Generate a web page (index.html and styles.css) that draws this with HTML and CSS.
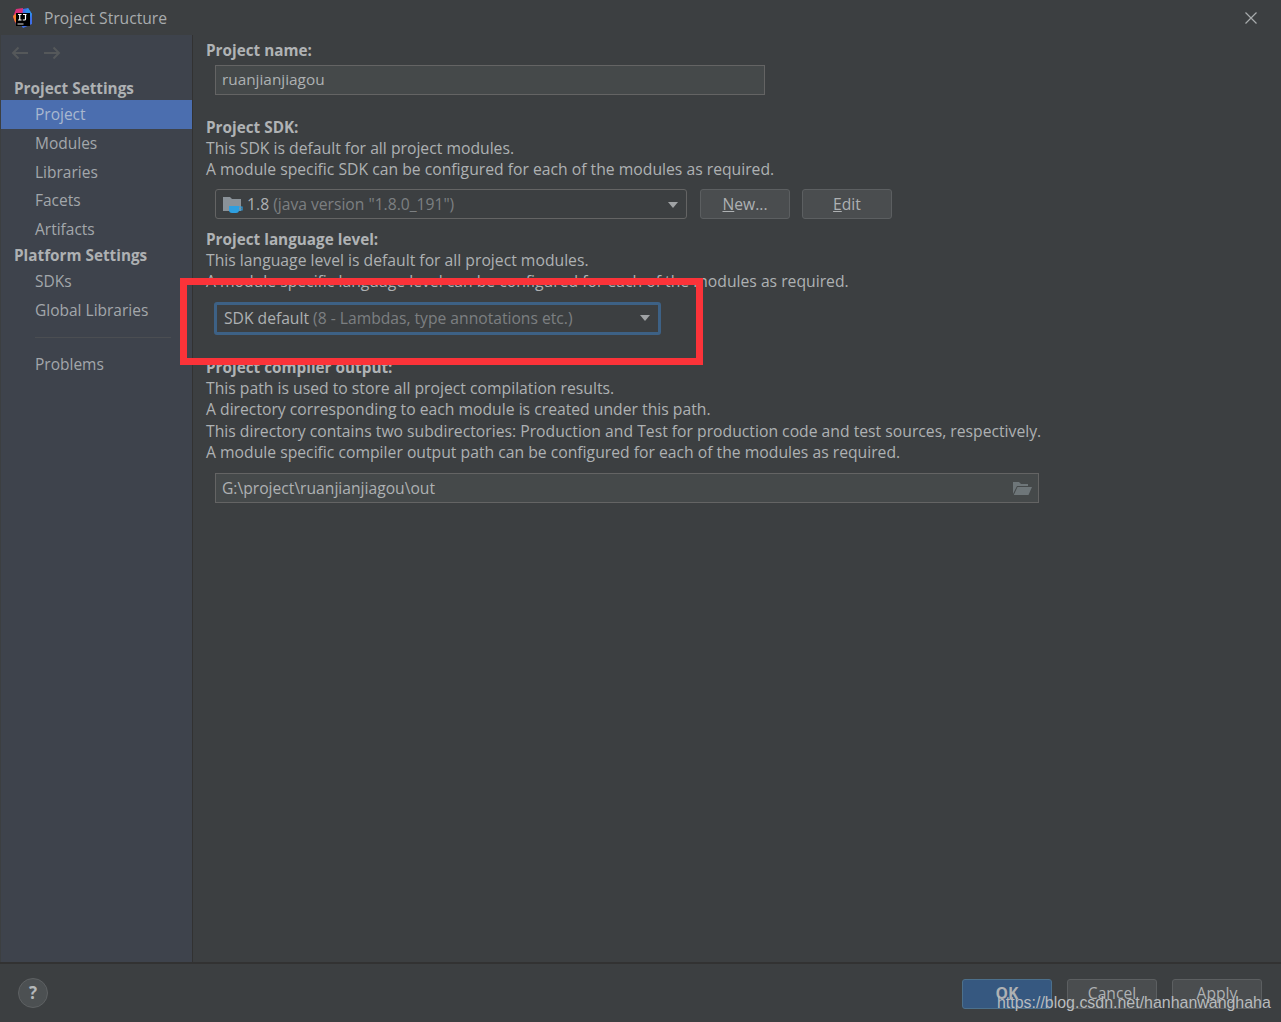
FILE: index.html
```html
<!DOCTYPE html>
<html lang="en">
<head>
    <meta charset="UTF-8">
    <title>Project Structure</title>
    <link rel="stylesheet" href="styles.css">
</head>
<body>
    <div class="dialog">
        <div class="titlebar">
            <svg class="app-logo" width="20" height="20" viewBox="0 0 20 20">
                <path d="M3 1 L10 0 L10 18 L3 16 L0 9 Z" fill="#d9307a"/>
                <path d="M0 8 L4 5 L5 15 L2 14 Z" fill="#f5822a"/>
                <path d="M10 1 L15 0 L19 6 L19 16 L10 20 L8 17 Z" fill="#3f6ee8"/>
                <path d="M12 3 L15 0 L19 6 L17 10 Z" fill="#2f8fe8"/>
                <rect x="3" y="5" width="14" height="13" fill="#000"/>
                <rect x="4.500" y="15.500" width="6" height="1" fill="#ddd"/>
                <path d="M5 6.500 H8.500 M6.750 6.500 V12 M5 12 H8.500 M10 6.500 H13.500 M12.500 6.500 V11 Q12.500 12 11.500 12 H9.800" stroke="#fff" stroke-width="1.200" fill="none"/>
            </svg>
            <span class="title">Project Structure</span>
            <svg class="close" width="14" height="14" viewBox="0 0 14 14">
                <path d="M1.500 1.500 L12.500 12.500 M12.500 1.500 L1.500 12.500" stroke="#a8abad" stroke-width="1.200" fill="none"/>
            </svg>
        </div>

        <div class="main">
            <div class="sidebar">
                <div class="nav-arrows">
                    <svg width="18" height="14" viewBox="0 0 18 14"><path d="M17 7 H2 M7.500 1.500 L2 7 L7.500 12.500" stroke="#55585a" stroke-width="2" fill="none"/></svg>
                    <svg width="18" height="14" viewBox="0 0 18 14"><path d="M1 7 H16 M10.500 1.500 L16 7 L10.500 12.500" stroke="#55585a" stroke-width="2" fill="none"/></svg>
                </div>
                <div class="group">Project Settings</div>
                <div class="item selected">Project</div>
                <div class="item">Modules</div>
                <div class="item">Libraries</div>
                <div class="item">Facets</div>
                <div class="item">Artifacts</div>
                <div class="group group-second">Platform Settings</div>
                <div class="item">SDKs</div>
                <div class="item">Global Libraries</div>
                <div class="side-sep"></div>
                <div class="item">Problems</div>
            </div>

            <div class="content">
                <div class="label">Project name:</div>
                <div class="field name-field">ruanjianjiagou</div>

                <div class="label sdk-label">Project SDK:</div>
                <div class="line">This SDK is default for all project modules.</div>
                <div class="line">A module specific SDK can be configured for each of the modules as required.</div>
                <div class="sdk-row">
                    <div class="combo sdk-combo">
                        <svg class="sdk-icon" width="20" height="18" viewBox="0 0 20 18">
                            <path d="M0 1 H7 L9 3 H18 V15 H0 Z" fill="#8a9299"/>
                            <path d="M6 10 H16 V14 Q16 17 13 17 H9 Q6 17 6 14 Z" fill="#2e9fe0"/>
                            <path d="M16 11 H19 V14 H15" stroke="#2e9fe0" stroke-width="1.200" fill="none"/>
                        </svg>
                        <span>1.8</span>&nbsp;<span class="muted">(java version "1.8.0_191")</span>
                        <span class="arrow"></span>
                    </div>
                    <div class="btn btn-new"><u>N</u>ew...</div>
                    <div class="btn"><u>E</u>dit</div>
                </div>

                <div class="label lang-label">Project language level:</div>
                <div class="line">This language level is default for all project modules.</div>
                <div class="line">A module specific language level can be configured for each of the modules as required.</div>
                <div class="combo lang-combo">
                    <span>SDK default</span>&nbsp;<span class="muted">(8 - Lambdas, type annotations etc.)</span>
                    <span class="arrow"></span>
                </div>

                <div class="label out-label">Project compiler output:</div>
                <div class="line">This path is used to store all project compilation results.</div>
                <div class="line">A directory corresponding to each module is created under this path.</div>
                <div class="line">This directory contains two subdirectories: Production and Test for production code and test sources, respectively.</div>
                <div class="line">A module specific compiler output path can be configured for each of the modules as required.</div>
                <div class="field out-field">
                    <span>G:\project\ruanjianjiagou\out</span>
                    <svg width="20" height="15" viewBox="0 0 20 15">
                        <path d="M1 1 H7 L9 3 H16 V5 H5 L1 13 Z" fill="#6e7679"/>
                        <path d="M5.500 6 H20 L16.500 14 H1.800 Z" fill="#6e7679"/>
                    </svg>
                </div>
            </div>
        </div>

        <div class="footer">
            <div class="help">?</div>
            <div class="footer-btns">
                <div class="btn btn-ok">OK</div>
                <div class="btn">Cancel</div>
                <div class="btn">Apply</div>
            </div>
        </div>
    </div>

    <!-- annotation and watermark sit on top of the screenshot -->
    <div class="red-box"></div>
    <div class="watermark">https://blog.csdn.net/hanhanwanghaha</div>
</body>
</html>
```

FILE: styles.css
```css
html, body {
    margin: 0;
    padding: 0;
}
body {
    width: 1281px;
    height: 1022px;
    overflow: hidden;
    position: relative;
    background-color: #3c3f41;
    font-family: "Open Sans", "Noto Sans", sans-serif;
    font-size: 15.65px;
    color: #b4b7b9;
}
.dialog {
    display: flex;
    flex-direction: column;
    height: 1022px;
}
.titlebar {
    display: flex;
    align-items: center;
    height: 35px;
    padding: 0 23px 0 13px;
    flex: none;
}
.app-logo {
    margin-right: 11px;
}
.title {
    flex: 1;
    color: #a9acae;
}
.main {
    display: flex;
    flex: 1;
    min-height: 0;
    border-bottom: 2px solid #323232;
}
.sidebar {
    width: 191px;
    margin-left: 1px;
    background-color: #3e434c;
    border-right: 1px solid #323232;
    flex: none;
}
.nav-arrows {
    display: flex;
    gap: 14px;
    height: 35px;
    padding: 11px 0 0 10px;
    box-sizing: border-box;
}
.group {
    height: 22px;
    line-height: 21px;
    padding-left: 13px;
    margin-top: 8px;
    font-weight: 700;
    font-size: 15.3px;
    color: #aeb1b3;
}
.group-second {
    margin-top: 1px;
    height: 22.6px;
}
.item {
    height: 28.75px;
    line-height: 28px;
    padding-left: 34px;
    font-size: 15.5px;
    color: #a3a7ab;
}
.selected {
    background-color: #4b6eaf;
    color: #a9b8cf;
}
.side-sep {
    height: 1px;
    background-color: #4b4e52;
    margin: 12px 21px 12px 34px;
}
.content {
    flex: 1;
    padding-top: 5.4px;
    margin-left: 13px;
}
.label {
    font-weight: 700;
    font-size: 15.3px;
    line-height: 21px;
    color: #b0b3b5;
}
.line {
    font-size: 15.72px;
    line-height: 21.3px;
    color: #aeb1b3;
}
.field {
    box-sizing: border-box;
    height: 30px;
    margin: 3.6px 0 0 9px;
    padding: 0 6px;
    line-height: 26px;
    background-color: #45494a;
    border: 1px solid #646464;
    color: #aeb1b3;
}
.name-field {
    width: 550px;
    font-size: 15.35px;
}
.sdk-label {
    margin-top: 22px;
    height: 21px;
}
.sdk-row {
    display: flex;
    margin: 8px 0 0 9px;
}
.combo {
    box-sizing: border-box;
    position: relative;
    height: 30px;
    line-height: 28px;
    border: 1px solid #646464;
    border-radius: 3px;
    background-color: #3c3f41;
    color: #aeb1b3;
    white-space: nowrap;
}
.muted {
    color: #7c7f81;
}
.arrow {
    position: absolute;
    top: 12px;
    right: 8px;
    width: 0;
    height: 0;
    border-left: 5.5px solid transparent;
    border-right: 5.5px solid transparent;
    border-top: 6px solid #a0a3a5;
}
.sdk-combo {
    width: 472px;
    padding-left: 7px;
}
.sdk-icon {
    vertical-align: -4px;
}
.btn {
    box-sizing: border-box;
    width: 90px;
    height: 30px;
    line-height: 28px;
    text-align: center;
    background-color: #4a4d4f;
    border: 1px solid #5c5f61;
    border-radius: 3px;
    color: #aeb1b3;
    margin-left: 12px;
}
.btn-new {
    margin-left: 13px;
}
.lang-label {
    margin-top: 10px;
}
.lang-combo {
    width: 447px;
    height: 33px;
    line-height: 27px;
    margin: 10px 0 0 8px;
    padding-left: 7px;
    border: 3px solid #3d6185;
}
.lang-combo .arrow {
    top: 10px;
    right: 8px;
}
.out-label {
    margin-top: 22px;
}
.out-field {
    display: flex;
    align-items: center;
    justify-content: space-between;
    width: 824px;
    margin-top: 10px;
    padding-right: 6px;
}
.footer {
    display: flex;
    align-items: center;
    justify-content: space-between;
    height: 58px;
    flex: none;
    padding: 0 19px 0 18px;
}
.help {
    box-sizing: border-box;
    width: 30px;
    height: 30px;
    line-height: 27px;
    text-align: center;
    border-radius: 50%;
    background-color: #4c5052;
    border: 1px solid #5e6163;
    color: #b5b8ba;
    font-weight: 700;
    font-size: 17px;
}
.footer-btns {
    display: flex;
    margin-top: 1px;
}
.footer-btns .btn {
    margin-left: 15px;
    line-height: 27px;
}
.btn-ok {
    background-color: #365880;
    border-color: #4c708c;
    font-weight: 700;
}
.red-box {
    position: absolute;
    left: 180px;
    top: 278px;
    width: 523px;
    height: 87px;
    box-sizing: border-box;
    border: 7px solid #fb3339;
}
.watermark {
    position: absolute;
    left: 997px;
    top: 993px;
    font-family: "Liberation Sans", Arial, sans-serif;
    font-size: 15.95px;
    line-height: 20px;
    color: #b9bcbe;
    white-space: nowrap;
}
```
